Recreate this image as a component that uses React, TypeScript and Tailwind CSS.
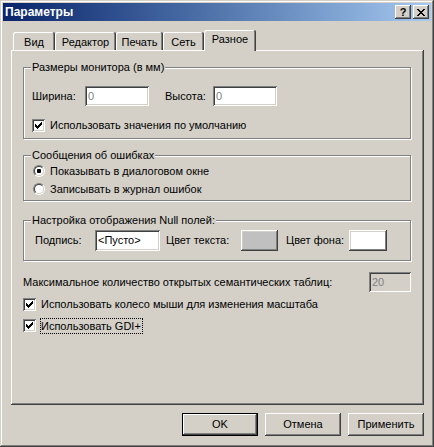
import type { ReactNode } from 'react';

const raised = 'shadow-[inset_-1px_-1px_#404040,inset_1px_1px_#fff,inset_-2px_-2px_#808080,inset_2px_2px_#d4d0c8]';
const sunken = 'shadow-[inset_1px_1px_#808080,inset_-1px_-1px_#fff,inset_2px_2px_#404040,inset_-2px_-2px_#d4d0c8]';
const etched = 'border border-[#808080] shadow-[inset_1px_1px_#fff,1px_1px_#fff]';

function CheckBox({ checked }: { checked?: boolean }) {
  return (
    <div className={`w-[13px] h-[13px] shrink-0 bg-white relative ${sunken}`}>
      {checked && (
        <svg className="absolute left-[3px] top-[3px]" width="7" height="7" viewBox="0 0 7 7" shapeRendering="crispEdges">
          <path
            d="M0 2h1v3H0z M1 3h1v3H1z M2 4h1v3H2z M3 3h1v3H3z M4 2h1v3H4z M5 1h1v3H5z M6 0h1v3H6z"
            fill="#000"
          />
        </svg>
      )}
    </div>
  );
}

function Radio({ checked }: { checked?: boolean }) {
  return (
    <div className="w-[12px] h-[12px] shrink-0 rounded-full border border-t-[#808080] border-l-[#808080] border-r-white border-b-white">
      <div className="w-full h-full rounded-full bg-white border border-t-[#404040] border-l-[#404040] border-r-[#d4d0c8] border-b-[#d4d0c8] flex items-center justify-center">
        {checked && <div className="w-[4px] h-[4px] rounded-[1px] bg-black" />}
      </div>
    </div>
  );
}

function Group({ title, className, children }: { title: string; className: string; children: ReactNode }) {
  return (
    <div className={`relative ${etched} ${className}`}>
      <span className="absolute -top-[7px] left-[7px] bg-[#d4d0c8] pl-[1px] pr-[1px] leading-[13px]">{title}</span>
      {children}
    </div>
  );
}

function Edit({ value, className, gray, disabled }: { value: string; className: string; gray?: boolean; disabled?: boolean }) {
  return (
    <div
      className={`${sunken} ${disabled ? 'bg-[#d4d0c8]' : 'bg-white'} ${gray ? 'text-[#808080]' : 'text-black'} flex items-center pl-[3px] ${className}`}
    >
      {value}
    </div>
  );
}

function Tab({ label, width, selected }: { label: string; width: string; selected?: boolean }) {
  if (selected) {
    return (
      <div
        className={`${width} h-[21px] -mb-[1px] relative z-10 bg-[#d4d0c8] rounded-t-[2px] pt-[3px] text-center leading-[13px] shadow-[inset_-1px_0_#404040,inset_1px_1px_#fff,inset_-2px_0_#808080]`}
      >
        {label}
      </div>
    );
  }
  return (
    <div
      className={`${width} h-[18px] bg-[#d4d0c8] rounded-t-[2px] pt-[4px] text-center leading-[13px] shadow-[inset_-1px_0_#404040,inset_1px_1px_#fff,inset_-2px_0_#808080]`}
    >
      {label}
    </div>
  );
}

function Button({ label, isDefault }: { label: string; isDefault?: boolean }) {
  if (isDefault) {
    return (
      <div className="w-[76px] h-[23px] border border-black">
        <div className={`w-full h-full flex items-center justify-center ${raised}`}>{label}</div>
      </div>
    );
  }
  return <div className={`w-[76px] h-[23px] flex items-center justify-center ${raised}`}>{label}</div>;
}

export default function App() {
  return (
    <div
      className="w-[434px] h-[447px] bg-[#d4d0c8] p-[3px] flex flex-col text-[11px] text-black font-['Liberation_Sans',Arial,sans-serif] shadow-[inset_-1px_-1px_#404040,inset_1px_1px_#d4d0c8,inset_-2px_-2px_#808080,inset_2px_2px_#fff]"
    >
      <div className="h-[18px] flex items-center pl-[2px] pr-[2px] bg-linear-to-r from-[#0a246a] to-[#a6caf0]">
        <span className="text-white font-bold text-[12px] leading-[14px]">Параметры</span>
        <div className="ml-auto flex gap-[2px]">
          <div className={`w-[16px] h-[14px] bg-[#d4d0c8] flex items-center justify-center font-bold text-[11px] leading-[11px] ${raised}`}>
            ?
          </div>
          <div className={`w-[16px] h-[14px] bg-[#d4d0c8] flex items-center justify-center ${raised}`}>
            <svg width="8" height="7" viewBox="0 0 8 7" shapeRendering="crispEdges">
              <path
                d="M0 0h2v1H0z M6 0h2v1H6z M1 1h2v1H1z M5 1h2v1H5z M2 2h4v1H2z M3 3h2v1H3z M2 4h4v1H2z M1 5h2v1H1z M5 5h2v1H5z M0 6h2v1H0z M6 6h2v1H6z"
                fill="#000"
              />
            </svg>
          </div>
        </div>
      </div>

      <div className="flex flex-col pl-[8px] pr-[7px]">
        <div className="mt-[9px] h-[20px] flex items-end pl-[2px]">
          <div className="flex items-end pr-[2px]">
            <Tab label="Вид" width="w-[42px]" />
            <Tab label="Редактор" width="w-[61px]" />
            <Tab label="Печать" width="w-[47px]" />
            <Tab label="Сеть" width="w-[41px]" />
          </div>
          <div className="-ml-[2px]">
            <Tab label="Разное" width="w-[52px]" selected />
          </div>
        </div>

        <div className="h-[355px] pl-[12px] pr-[13px] pt-[17px] shadow-[inset_-1px_-1px_#404040,inset_1px_1px_#fff,inset_-2px_-2px_#808080]">
          <Group title="Размеры монитора (в мм)" className="h-[72px] pl-[8px] pt-[18px]">
            <div className="flex items-center h-[20px]">
              <span className="w-[53px]">Ширина:</span>
              <Edit value="0" gray className="w-[64px] h-[20px]" />
              <span className="w-[48px] ml-[16px]">Высота:</span>
              <Edit value="0" gray className="w-[64px] h-[20px]" />
            </div>
            <div className="flex items-center h-[13px] mt-[13px]">
              <CheckBox checked />
              <span className="ml-[4px] border border-transparent leading-[13px]">Использовать значения по умолчанию</span>
            </div>
          </Group>

          <Group title="Сообщения об ошибках" className="h-[46px] mt-[16px] pl-[9px] pt-[6px]">
            <div className="flex items-center h-[18px]">
              <Radio checked />
              <span className="ml-[5px]">Показывать в диалоговом окне</span>
            </div>
            <div className="flex items-center h-[18px]">
              <Radio />
              <span className="ml-[5px]">Записывать в журнал ошибок</span>
            </div>
          </Group>

          <Group title="Настройка отображения Null полей:" className="h-[41px] mt-[19px] pl-[11px] pt-[9px]">
            <div className="flex items-center h-[21px]">
              <span className="w-[60px]">Подпись:</span>
              <Edit value="<Пусто>" className="w-[65px] h-[21px] pl-[2px]" />
              <span className="w-[75px] ml-[6px]">Цвет текста:</span>
              <div className={`w-[37px] h-[21px] bg-[#c0c0c0] ${raised}`} />
              <span className="w-[63px] ml-[8px]">Цвет фона:</span>
              <div className={`w-[38px] h-[21px] bg-white ${raised}`} />
            </div>
          </Group>

          <div className="flex items-center justify-between h-[20px] mt-[11px]">
            <span>Максимальное количество открытых семантических таблиц:</span>
            <Edit value="20" gray disabled className="w-[42px] h-[20px]" />
          </div>

          <div className="flex items-center h-[13px] mt-[6px]">
            <CheckBox checked />
            <span className="ml-[4px] border border-transparent leading-[13px]">
              Использовать колесо мыши для изменения масштаба
            </span>
          </div>
          <div className="flex items-center h-[13px] mt-[8px]">
            <CheckBox checked />
            <span className="ml-[4px] border border-dotted border-black leading-[14px] pr-[1px]">Использовать GDI+</span>
          </div>
        </div>

        <div className="flex justify-end gap-[7px] mt-[8px]">
          <Button label="OK" isDefault />
          <Button label="Отмена" />
          <Button label="Применить" />
        </div>
      </div>
    </div>
  );
}
